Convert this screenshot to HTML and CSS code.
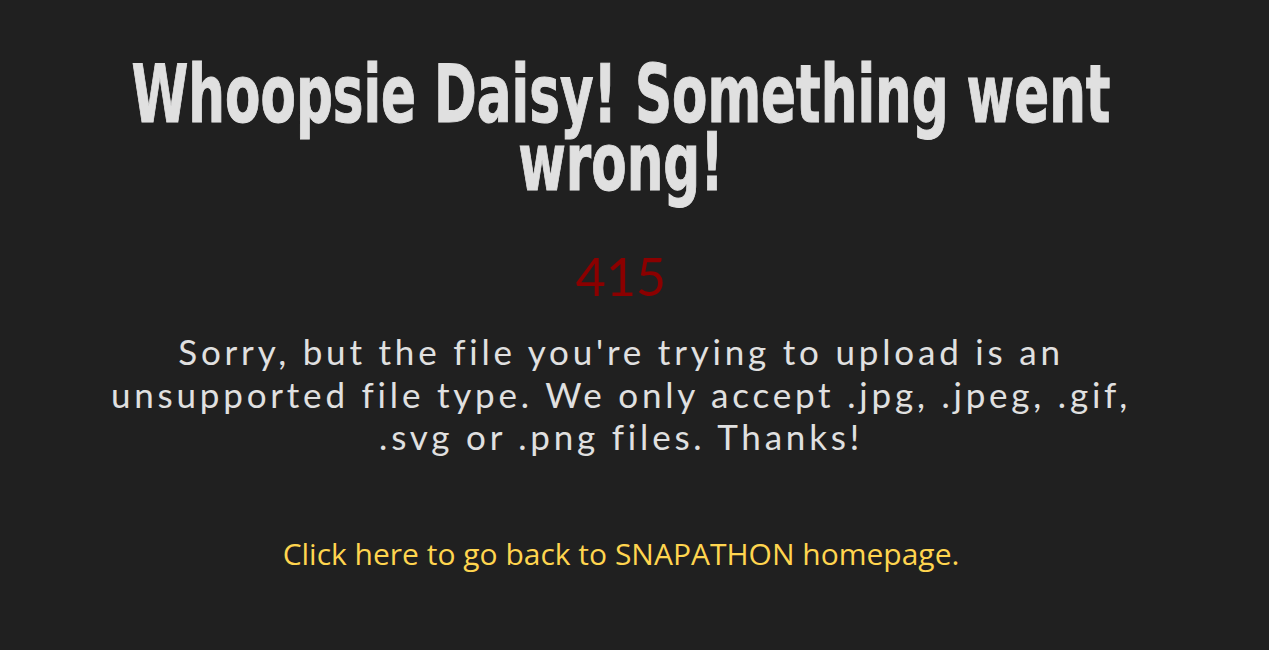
FILE: index.html
```html
<!DOCTYPE html>
<html lang="en">
<head>
<meta charset="utf-8">
<title>Error 415</title>
<link rel="stylesheet" href="styles.css">
</head>
<body>
<main class="page">
  <h1 class="title">Whoopsie Daisy! Something went wrong!</h1>
  <p class="code">415</p>
  <p class="message">Sorry, but the file you're trying to upload is an unsupported file type. We only accept .jpg, .jpeg, .gif, .svg or .png files. Thanks!</p>
  <a class="home-link" href="#">Click here to go back to SNAPATHON homepage.</a>
</main>
</body>
</html>
```
FILE: styles.css
```css
html, body {
  margin: 0;
  padding: 0;
  background: #202020;
  height: 100%;
}
.page {
  width: 1242px;
  display: flex;
  flex-direction: column;
  align-items: center;
  text-align: center;
  padding-top: 61px;
}
.title {
  flex: none;
  margin: 0;
  width: 1400px;
  font-family: "DejaVu Sans Condensed", "DejaVu Sans", sans-serif;
  font-weight: 700;
  font-size: 80px;
  line-height: 68px;
  color: #e0e0e0;
  -webkit-text-stroke: 1px #e0e0e0;
  transform: scaleX(0.716);
}
.code {
  margin: 49px 0 0;
  font-family: Lato, sans-serif;
  font-weight: 400;
  font-size: 52px;
  line-height: 60px;
  color: #8b0000;
}
.message {
  margin: 24px 0 0;
  max-width: 1060px;
  font-family: Lato, sans-serif;
  font-size: 35px;
  line-height: 42.5px;
  letter-spacing: 3.8px;
  color: #e0e0e0;
}
.home-link {
  margin-top: 76px;
  font-family: "Open Sans", sans-serif;
  font-size: 30px;
  line-height: 40px;
  color: #ffd54f;
  text-decoration: none;
}
```
